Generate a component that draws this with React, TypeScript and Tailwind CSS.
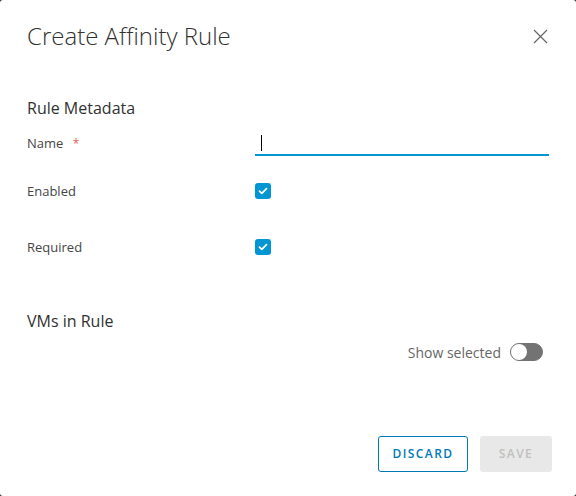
import { useState } from "react";

function Check() {
  return (
    <span className="flex h-4 w-4 items-center justify-center rounded-[3px] bg-[#0095d3]">
      <svg width="10" height="8" viewBox="0 0 10 8" fill="none">
        <path d="M1.5 4.2 L3.8 6.3 L8.5 1.6" stroke="white" strokeWidth="1.8" strokeLinecap="round" strokeLinejoin="round" />
      </svg>
    </span>
  );
}

export default function App() {
  const [name, setName] = useState("");
  const [showSelected, setShowSelected] = useState(false);

  return (
    <div className="h-[496px] w-[576px] bg-[#313131]" style={{ fontFamily: "'Open Sans', Lato, sans-serif" }}>
      <div className="flex h-full w-full flex-col rounded-[3px] bg-white">
        {/* header */}
        <div className="mt-[20px] flex h-[32px] items-center justify-between pl-[27px] pr-[24px]">
          <h1 className="text-[24px] font-light leading-[32px] text-[#313131]">Create Affinity Rule</h1>
          <button className="flex h-6 w-6 items-center justify-center text-[#666]">
            <svg width="15" height="15" viewBox="0 0 15 15" fill="none">
              <path d="M1 1 L14 14 M14 1 L1 14" stroke="currentColor" strokeWidth="1.2" />
            </svg>
          </button>
        </div>

        {/* Rule metadata */}
        <div className="mt-[44px] h-[24px] pl-[27px] text-[16px] leading-[24px] text-[#313131]">Rule Metadata</div>

        <div className="mt-[11px] flex h-[25px] pl-[27px] pr-[27px]">
          <label className="w-[228px] text-[13px] leading-[24px] text-[#454545]">
            Name <span className="ml-[6px] text-[12px] text-[#e0604e]">*</span>
          </label>
          <div className="flex h-[25px] flex-1 items-center border-b-2 border-[#0095d3]">
            <span className="ml-[6px] h-[16px] w-px bg-black" />
            <input
              value={name}
              onChange={(e) => setName(e.target.value)}
              className="h-full flex-1 px-[2px] text-[13px] text-[#313131] caret-transparent outline-none"
            />
          </div>
        </div>

        <div className="mt-[27px] flex h-4 items-center pl-[27px]">
          <span className="w-[228px] pt-[2px] text-[13px] text-[#454545]">Enabled</span>
          <Check />
        </div>

        <div className="mt-[40px] flex h-4 items-center pl-[27px]">
          <span className="w-[228px] pt-[2px] text-[13px] text-[#454545]">Required</span>
          <Check />
        </div>

        {/* VMs */}
        <div className="mt-[54px] h-[24px] pl-[27px] text-[16px] leading-[24px] text-[#313131]">VMs in Rule</div>

        <div className="mt-[10px] flex h-[18px] items-center justify-end pr-[33px]">
          <span className="mr-[9px] text-[14px] text-[#666]">Show selected</span>
          <button
            onClick={() => setShowSelected(!showSelected)}
            className="flex h-[18px] w-[33px] items-center rounded-full border border-[#737373] bg-[#737373]"
          >
            <span className={"h-4 w-4 rounded-full bg-white " + (showSelected ? "ml-auto" : "")} />
          </button>
        </div>

        {/* footer */}
        <div className="mt-[75px] flex justify-end gap-[12px] pr-[24px]">
          <button className="h-[36px] w-[90px] rounded-[3px] border border-[#0079b8] text-[12px] font-semibold tracking-[0.12em] text-[#0079b8]">
            DISCARD
          </button>
          <button disabled className="h-[36px] w-[72px] rounded-[3px] bg-[#e8e8e8] text-[12px] font-semibold tracking-[0.12em] text-[#c0c0c0]">
            SAVE
          </button>
        </div>
      </div>
    </div>
  );
}
